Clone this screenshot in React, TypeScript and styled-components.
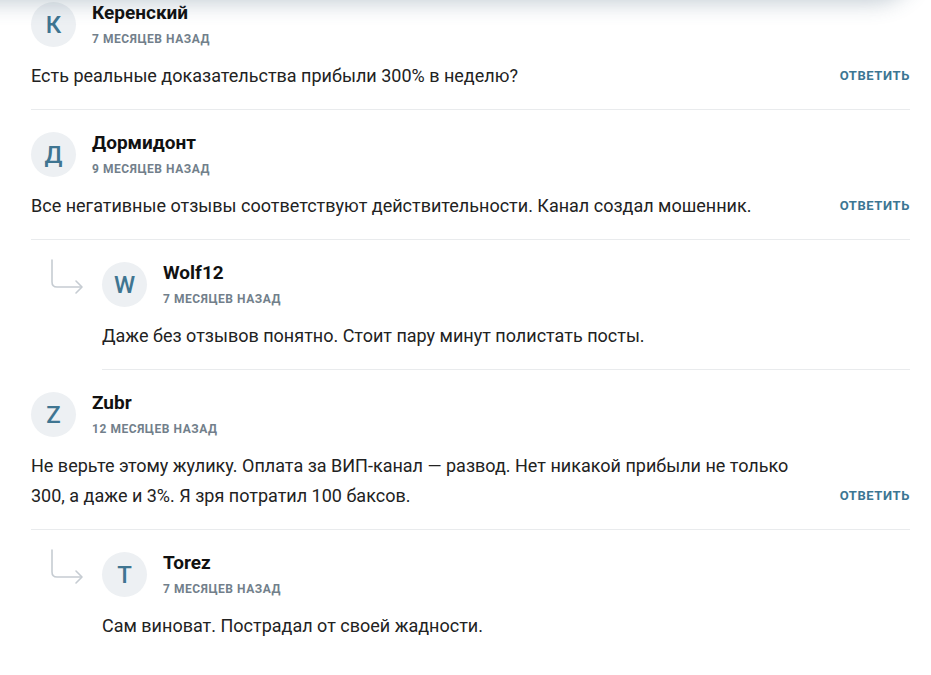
import React from "react";
import styled, { createGlobalStyle } from "styled-components";

const GlobalStyle = createGlobalStyle`
  html, body {
    margin: 0;
    padding: 0;
    background: #fff;
  }
  body {
    font-family: Roboto, "Liberation Sans", sans-serif;
    color: #222;
    overflow: hidden;
  }
`;

const TopShadow = styled.div`
  position: fixed;
  top: -40px;
  left: -30px;
  width: 945px;
  height: 40px;
  border-radius: 0 0 60px 0;
  box-shadow: 0 2px 22px rgba(60, 90, 115, 0.32);
  background: #fff;
  z-index: 10;
`;

const Page = styled.div`
  padding: 0 21px 0 31px;
  margin-top: -20px;
`;

const CommentItem = styled.div<{ $reply?: boolean }>`
  display: flex;
  padding-left: ${p => (p.$reply ? "71px" : "0")};
  position: relative;

  &:last-child > div:last-child {
    border-bottom-color: transparent;
  }
`;

const ReplyArrow = styled.svg`
  position: absolute;
  left: 18px;
  top: 19px;
`;

const CommentBody = styled.div`
  flex: 1;
  padding: 22px 0 18px;
  border-bottom: 1px solid #e9ebed;
`;

const Header = styled.div`
  display: flex;
  align-items: center;
  gap: 16px;
`;

const Avatar = styled.div`
  width: 45px;
  height: 45px;
  border-radius: 50%;
  background: #edf0f3;
  color: #3f7591;
  display: flex;
  align-items: center;
  justify-content: center;
  font-size: 24px;
  font-weight: 500;
  flex-shrink: 0;
`;

const Meta = styled.div`
  display: flex;
  flex-direction: column;
  margin-top: -2px;
`;

const Name = styled.div`
  font-size: 19px;
  font-weight: 700;
  color: #111;
  line-height: 22px;
`;

const Time = styled.div`
  font-size: 12px;
  line-height: 14px;
  font-weight: 700;
  color: #727f8b;
  letter-spacing: 0.55px;
  text-transform: uppercase;
  margin-top: 8px;
`;

const Row = styled.div`
  display: flex;
  align-items: flex-end;
  gap: 24px;
  margin-top: 14px;
`;

const Text = styled.div`
  flex: 1;
  font-size: 18px;
  line-height: 30px;
`;

const ReplyButton = styled.button`
  margin-left: auto;
  border: 0;
  background: none;
  padding: 0;
  font-family: inherit;
  font-size: 13px;
  font-weight: 700;
  letter-spacing: 0.6px;
  text-transform: uppercase;
  color: #3c7693;
  line-height: 30px;
  cursor: pointer;
`;

type Comment = {
  letter: string;
  name: string;
  time: string;
  text: string;
  reply?: boolean;
};

const comments: Comment[] = [
  {
    letter: "К",
    name: "Керенский",
    time: "7 месяцев назад",
    text: "Есть реальные доказательства прибыли 300% в неделю?",
  },
  {
    letter: "Д",
    name: "Дормидонт",
    time: "9 месяцев назад",
    text: "Все негативные отзывы соответствуют действительности. Канал создал мошенник.",
  },
  {
    letter: "W",
    name: "Wolf12",
    time: "7 месяцев назад",
    text: "Даже без отзывов понятно. Стоит пару минут полистать посты.",
    reply: true,
  },
  {
    letter: "Z",
    name: "Zubr",
    time: "12 месяцев назад",
    text: "Не верьте этому жулику. Оплата за ВИП-канал — развод. Нет никакой прибыли не только 300, а даже и 3%. Я зря потратил 100 баксов.",
  },
  {
    letter: "T",
    name: "Torez",
    time: "7 месяцев назад",
    text: "Сам виноват. Пострадал от своей жадности.",
    reply: true,
  },
];

const Arrow = () => (
  <ReplyArrow width="36" height="36" viewBox="0 0 36 36" fill="none">
    <path
      d="M3 1 V23 Q3 28 8 28 H32"
      stroke="#c6ccd2"
      strokeWidth="1.6"
      strokeLinecap="round"
    />
    <path
      d="M27 22 L33 28 L27 34"
      stroke="#c6ccd2"
      strokeWidth="1.6"
      strokeLinecap="round"
      strokeLinejoin="round"
    />
  </ReplyArrow>
);

export default function App() {
  return (
    <>
      <GlobalStyle />
      <TopShadow />
      <Page>
        {comments.map((c, i) => (
          <CommentItem key={i} $reply={c.reply}>
            {c.reply && <Arrow />}
            <CommentBody>
              <Header>
                <Avatar>{c.letter}</Avatar>
                <Meta>
                  <Name>{c.name}</Name>
                  <Time>{c.time}</Time>
                </Meta>
              </Header>
              <Row>
                <Text>{c.text}</Text>
                {!c.reply && <ReplyButton>Ответить</ReplyButton>}
              </Row>
            </CommentBody>
          </CommentItem>
        ))}
      </Page>
    </>
  );
}
